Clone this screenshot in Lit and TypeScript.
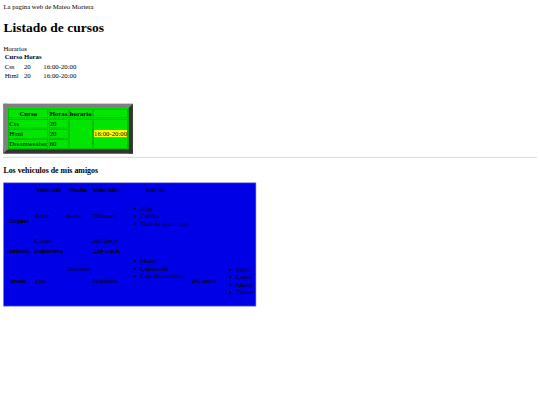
import { LitElement, html, css } from "lit";
import { customElement } from "lit/decorators.js";

@customElement("app-root")
export class AppRoot extends LitElement {
  static styles = css`
    :host { display: block; width: 540px; height: 405px; overflow: hidden; }
    .page { box-sizing: border-box; width: 1280px; transform: scale(0.421875); transform-origin: 0 0; font-family: "Liberation Serif", serif; font-size: 16px; color: #000; padding: 8px; }
    h1 { font-size: 32px; margin: 21.44px 0; }
    h3 { font-size: 18.72px; margin: 18.72px 0; }
    hr { margin: 8px 0; border-style: solid; border-width: 1px; border-color: #a8a8a8 #ddd #ddd #a8a8a8; }
    table { border-collapse: separate; border-spacing: 2px; }
    td, th { padding: 1px; }
    .gap1 { height: 54px; }
    .courses { border-style: solid; border-width: 10px; border-color: #808080 #333 #333 #808080; background: #00e600; }
    .courses td, .courses th { border: 1px solid #008c00; }
    .courses .time { background: #ffff00; }
    .cars { background: #0000e6; border: 1px solid #9a9af0; width: 599px; }
    .cars td, .cars th { padding: 2px; }
    .cars .head th { height: 22px; padding-top: 4px; }
    .cars .head th.name { width: 62px; }
    .cars .filler { height: 51px; }
    ul { margin: 17px 0; padding-left: 40px; }
    ul.tight { margin: 0; }
    ul.normal { margin: 16px 0; }
  `;
  render() {
    return html`
      <div class="page">
        <div>La pagina web de Mateo Mortera</div>
        <h1>Listado de cursos</h1>
        <div>Horarios</div>
        <table>
          <tr><th>Curso</th><th>Horas</th><th></th></tr>
          <tr><td>Css</td><td>20</td><td>16:00-20:00</td></tr>
          <tr><td>Html</td><td>20</td><td>16:00-20:00</td></tr>
        </table>
        <div class="gap1"></div>
        <table class="courses">
          <tr><th>Curso</th><th>Horas</th><th>horario</th><th></th></tr>
          <tr><td>Css</td><td>20</td><td rowspan="3"></td><td rowspan="3"><span class="time">16:00-20:00</span></td></tr>
          <tr><td>Html</td><td>20</td></tr>
          <tr><td>Dreamweaber</td><td>60</td></tr>
        </table>
        <hr />
        <h3>Los vehiculos de mis amigos</h3>
        <table class="cars">
          <tr class="head"><th class="name"></th><th>Vehiculo</th><th>Medio</th><th>Velocidad</th><th>Partes</th><th></th><th></th></tr>
          <tr>
            <th rowspan="2">Miguel</th><td>Avion</td><td>Aereo</td><td>700km/h</td>
            <td><ul><li>Alas</li><li>Cabina</li><li>Tren de aterrizaje</li></ul></td><td></td><td></td>
          </tr>
          <tr><td>Coche</td><td></td><td>200 km/h</td><td></td><td></td><td></td></tr>
          <tr><th>Antonio</th><th>Deportivo</th><td></td><th>250 km/h</th><td></td><td></td><td></td></tr>
          <tr>
            <th rowspan="2">Irene</th><td rowspan="2">Yate</td><td>Terrestre</td><td rowspan="2">Maritimo</td>
            <td><ul class="tight"><li>Motor</li><li>Carroceria</li><li>Caja de cambios</li></ul></td>
            <td rowspan="2">180 km/h</td>
            <td rowspan="2"><ul class="normal"><li>Velas</li><li>Casco</li><li>Motor</li><li>Timon</li></ul></td>
          </tr>
          <tr><td class="filler"></td><td class="filler"></td></tr>
        </table>
      </div>
    `;
  }
}
